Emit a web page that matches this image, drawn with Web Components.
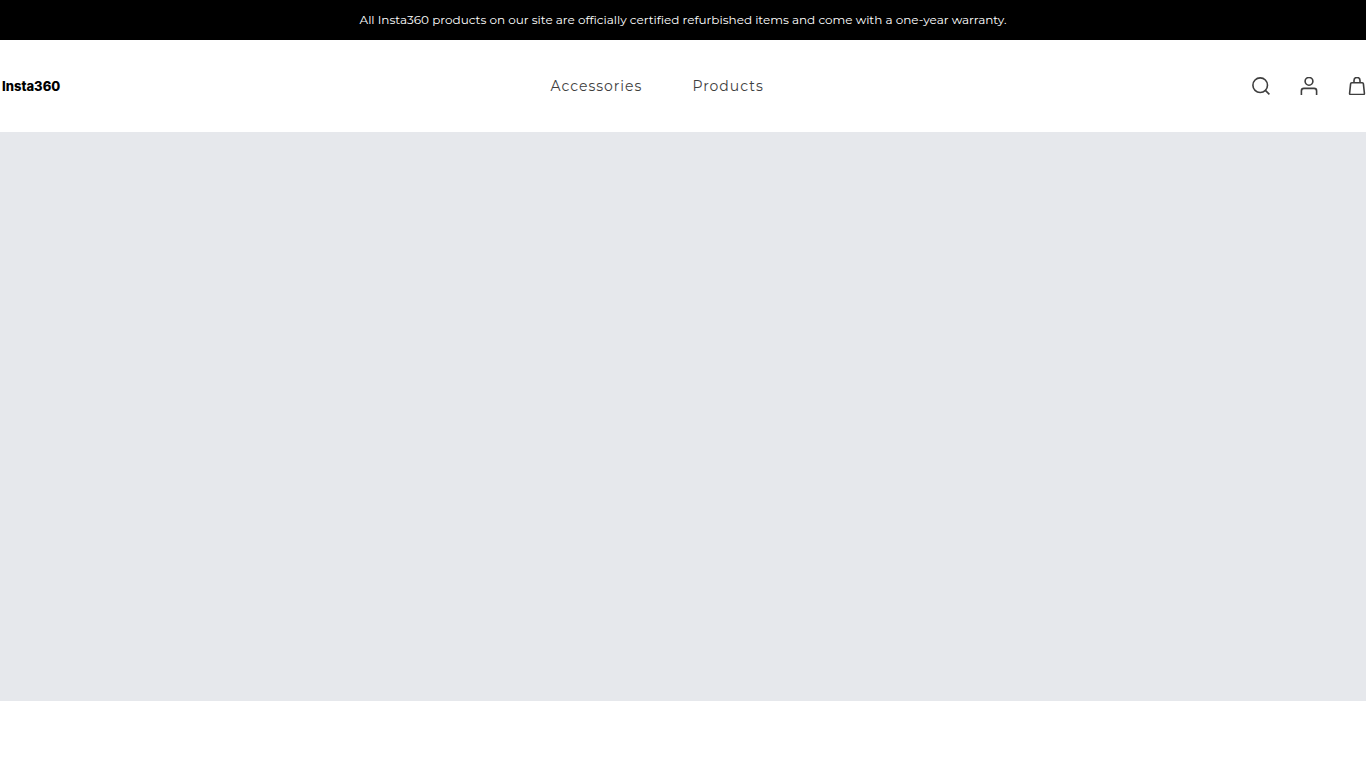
<!DOCTYPE html>
<html lang="en">
<head>
<meta charset="utf-8">
<meta name="viewport" content="width=device-width, initial-scale=1">
<title>Insta360</title>
<style>
  body { margin: 0; background: #fff; color: #3e3e3e; font-family: Montserrat, Inter, "Open Sans", sans-serif; }
</style>
</head>
<body>
<announcement-bar>All Insta360 products on our site are officially certified refurbished items and come with a one-year warranty.</announcement-bar>
<site-header>
  <brand-logo slot="logo">Insta360</brand-logo>
  <nav-link href="#accessories">Accessories</nav-link>
  <nav-link href="#products">Products</nav-link>
  <icon-button slot="actions" label="Search"><svg width="18" height="18" viewBox="0 0 18 18"><circle cx="8.2" cy="8.2" r="7.3"/><path d="M13.4 13.4l4 4"/></svg></icon-button>
  <icon-button slot="actions" label="Account"><svg width="18" height="18" viewBox="0 0 18 18"><circle cx="9" cy="4.3" r="3.9"/><path d="M1.4 18v-4.1q0-2.5 2.5-2.5h10.2q2.5 0 2.5 2.5V18"/></svg></icon-button>
  <icon-button slot="actions" label="Cart"><svg width="18" height="18" viewBox="0 0 18 18"><path d="M3.7 5.8h10.6q1 0 1.1 1l1 9.4q.1 1.3-1.2 1.3H2.8q-1.3 0-1.2-1.3l1-9.4q.1-1 1.1-1zM6 5.8V3.4Q6 .5 9 .5t3 2.9v2.4"/></svg></icon-button>
</site-header>
<hero-banner></hero-banner>
<script>
const define = (name, html, setup) => customElements.define(name, class extends HTMLElement {
  constructor() {
    super();
    const root = this.attachShadow({ mode: 'open' });
    root.innerHTML = html;
  }
  connectedCallback() { if (setup) setup(this, this.shadowRoot); }
});

define('announcement-bar', `<style>
  :host { display: block; background: #000; color: #fff; }
  p { margin: 0; padding: 10px 16px; font-size: 12px; line-height: 20px; text-align: center; }
</style><p><slot></slot></p>`);

define('site-header', `<style>
  :host { display: block; background: #fff; }
  header { display: flex; align-items: center; justify-content: space-between; padding: 34px 0; }
  nav { display: flex; gap: 50px; }
  .actions { display: flex; gap: 30px; }
</style><header><slot name="logo"></slot><nav aria-label="Main"><slot></slot></nav><div class="actions"><slot name="actions"></slot></div></header>`);

define('brand-logo', `<style>
  :host { display: block; }
  a { display: block; padding: 0 2px; color: #000; font: 800 13px/24px Inter, sans-serif; text-decoration: none; }
</style><a href="#home"><slot></slot></a>`);

define('nav-link', `<style>
  :host { display: block; }
  a { color: inherit; font-size: 14px; line-height: 24px; letter-spacing: 1px; text-decoration: none; }
</style><a><slot></slot></a>`, (host, root) => root.querySelector('a').href = host.getAttribute('href'));

define('icon-button', `<style>
  :host { display: block; }
  button { display: block; margin: 0; padding: 0; border: 0; background: none; color: inherit; cursor: pointer; }
  ::slotted(svg) { display: block; fill: none; stroke: currentColor; stroke-width: 1.6; stroke-linecap: butt; }
</style><button type="button"><slot></slot></button>`, (host, root) => root.querySelector('button').setAttribute('aria-label', host.getAttribute('label')));

define('hero-banner', `<style>
  :host { display: block; aspect-ratio: 12 / 5; background: #e6e8ec; }
</style>`);
</script>
</body>
</html>
